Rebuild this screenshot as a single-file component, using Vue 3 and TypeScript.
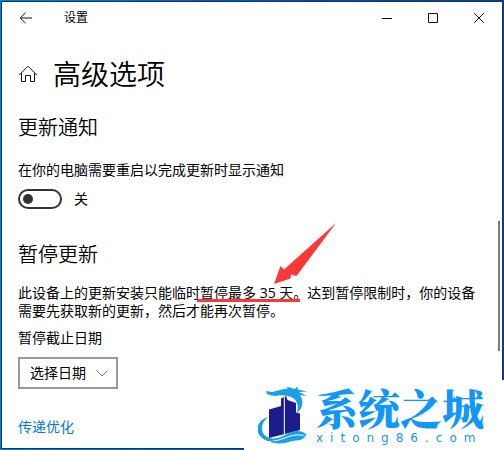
<script setup lang="ts">
import { ref } from 'vue'

const notify = ref(false)
const pauseUntil = ref('')
const dates: string[] = ['7 天', '14 天', '35 天']
</script>

<template>
  <div class="desktop">
    <div class="window">
      <header class="titlebar">
        <button class="back" type="button" aria-label="返回">
          <svg width="14" height="12" viewBox="0 0 14 12">
            <path d="M6.5 .8 1.2 6l5.3 5.2M1.2 6H13" />
          </svg>
        </button>
        <span class="caption">设置</span>
        <div class="controls">
          <button type="button" aria-label="最小化">
            <svg width="10" height="10" viewBox="0 0 10 10"><path d="M0 5.5h10" /></svg>
          </button>
          <button type="button" aria-label="最大化">
            <svg width="10" height="10" viewBox="0 0 10 10"><path d="M.5.5h9v9h-9z" /></svg>
          </button>
          <button type="button" aria-label="关闭">
            <svg width="10" height="10" viewBox="0 0 10 10"><path d="m.2.2 9.6 9.6m0-9.6L.2 9.8" /></svg>
          </button>
        </div>
      </header>

      <main class="page">
        <div class="heading">
          <svg class="home" width="20" height="18" viewBox="0 0 20 18">
            <path d="M1 10.2 10 1.2l9 9M3.5 8.2V16.500h4v-6h5v6h4V8.2" />
          </svg>
          <h1>高级选项</h1>
        </div>

        <section class="notify">
          <h2>更新通知</h2>
          <p id="notify-text">在你的电脑需要重启以完成更新时显示通知</p>
          <label class="toggle">
            <input v-model="notify" type="checkbox" role="switch" aria-describedby="notify-text" />
            <span>{{ notify ? '开' : '关' }}</span>
          </label>
        </section>

        <section class="pause">
          <h2>暂停更新</h2>
          <p>
            此设备上的更新安装只能临时<span class="marked">暂停最多 35 天。<svg
              class="arrow" width="64" height="64" viewBox="0 0 64 64" aria-hidden="true"
            ><path d="M1 62 7.500 44 11 47.500 63 1 23.500 54 18 52.500l-.5 4z" /></svg></span>达到暂停限制时，你的设备需要先获取新的更新，然后才能再次暂停。
          </p>
          <label class="date-label" for="pause-date">暂停截止日期</label>
          <div class="picker">
            <select id="pause-date" v-model="pauseUntil">
              <option value="">选择日期</option>
              <option v-for="d in dates" :key="d" :value="d">{{ d }}</option>
            </select>
            <svg width="12" height="7" viewBox="0 0 12 7" aria-hidden="true"><path d="m.5.5 5.500 5.500L11.500.5" /></svg>
          </div>
        </section>

        <a class="link" href="#">传递优化</a>
      </main>
      <div class="scrollbar"></div>
    </div>

    <aside class="watermark">
      <svg class="emblem" width="50" height="58" viewBox="3 6 50 58" aria-hidden="true">
        <path class="tower" d="M14 29.500 26 26V18.500L31 16l1.500 4L41 23v9.500l4 1V50L30 54 14 58z" />
        <path class="gap" d="M29.300 16.500V55" />
        <path class="wave" d="M13 37C0 41-1 54 10 60c13 6 22 1 30-2 5-1.500 9-1 12-3-3-3-7-4.500-11-4-8 1-14 7-22 7.500C7 59 2 46 13 37z" />
        <path class="gap" d="M13 61.500C24 62 31 56 41 55c4-.4 7 .5 9 .5" />
        <path class="wave" d="M12 59c9 5 18 2 25-1 5-2 10-1 14-3-3 6-8 5-14 6-9 3-18 4-25-2z" />
        <path class="wave" d="M12 14l-1-3 6 1 12-3 4-.5L31 6.500l9 2.500 2-2.500 1 3 9 2-8 .5 8 4-7-1c4 6 3 13-3 18 2-9 0-15-9-17-5-1-9-1-12 0-4 0-6-1-9-2z" />
      </svg>
      <div class="wordmark">
        <strong>系统之城</strong>
        <span>xitong86.com</span>
      </div>
    </aside>
  </div>
</template>

<style>
body {
  margin: 0;
}
</style>

<style scoped>
.desktop {
  position: relative;
  box-sizing: border-box;
  min-height: 100vh;
  display: flex;
  padding: 1px;
  background: linear-gradient(90deg, #0082d8, #0050b0 60%, #0a3c94);
  font-family: "Open Sans", "Noto Sans CJK SC", sans-serif;
  font-size: 14px;
  line-height: 18px;
  color: #000;
}
.window {
  position: relative;
  flex: 1;
  border: 1px solid #12365c;
  background: #fff;
}
svg {
  display: block;
  fill: none;
  stroke: #111;
}
button {
  display: flex;
  align-items: center;
  justify-content: center;
  padding: 0;
  border: 0;
  background: none;
}
.titlebar {
  display: flex;
  align-items: center;
  height: 32px;
  font-size: 12px;
}
.back {
  width: 48px;
  height: 32px;
}
.caption {
  margin-left: 14px;
}
.controls {
  display: flex;
  margin-left: auto;
}
.controls button {
  width: 46px;
  height: 32px;
}
.page {
  padding: 20px 24px 12px 16px;
}
.heading {
  display: flex;
  align-items: center;
  gap: 15px;
}
h1,
h2,
p {
  margin: 0;
}
h1,
h2 {
  font-weight: 350;
}
h1 {
  font-size: 28px;
  line-height: 40px;
}
h2 {
  font-size: 20px;
  line-height: 28px;
}
.notify {
  margin-top: 20px;
}
.notify p {
  margin-top: 19px;
}
.toggle {
  display: flex;
  align-items: center;
  gap: 12px;
  margin-top: 10px;
}
.toggle input {
  appearance: none;
  box-sizing: border-box;
  width: 44px;
  height: 20px;
  margin: 0;
  padding: 3px;
  border: 2px solid #333;
  border-radius: 10px;
}
.toggle input::before {
  content: "";
  display: block;
  width: 10px;
  height: 10px;
  border-radius: 50%;
  background: #333;
}
.toggle input:checked::before {
  margin-left: auto;
}
.pause {
  margin-top: 32px;
}
.pause p {
  margin-top: 15px;
}
.marked {
  position: relative;
}
.marked::after {
  content: "";
  position: absolute;
  left: -3px;
  right: 7px;
  bottom: 0;
  height: 3px;
  background: #fb3838;
}
.arrow {
  position: absolute;
  left: 73px;
  bottom: 16px;
  fill: #fb3838;
  stroke: none;
}
.date-label {
  display: block;
  margin-top: 9px;
}
.picker {
  position: relative;
  width: 100px;
  margin-top: 10px;
}
.picker select {
  appearance: none;
  box-sizing: border-box;
  display: block;
  width: 100%;
  height: 32px;
  padding: 0 10px;
  border: 2px solid #999;
  border-radius: 0;
  background: #fff;
  color: #000;
  font: inherit;
}
.picker svg {
  position: absolute;
  right: 10px;
  top: 13px;
  stroke: #777;
  pointer-events: none;
}
.link {
  display: inline-block;
  margin-top: 29px;
  color: #0078d7;
  text-decoration: none;
}
.scrollbar {
  position: absolute;
  right: 2px;
  top: 219px;
  width: 2px;
  height: 130px;
  background: #7a7a7a;
}
.watermark {
  position: absolute;
  right: 0;
  bottom: 0;
  box-sizing: border-box;
  display: flex;
  gap: 8px;
  width: 260px;
  height: 70px;
  padding: 6px 14px 0;
  background: #fff;
}
.emblem .tower {
  fill: #1c1c8c;
  stroke: none;
}
.emblem .gap {
  stroke: #fff;
}
.emblem .wave {
  fill: #1aa0e4;
  stroke: none;
}
.wordmark {
  display: flex;
  flex-direction: column;
  gap: 2px;
  color: #1296f8;
}
.wordmark strong {
  font-family: "Noto Serif CJK SC", "Noto Sans CJK SC", serif;
  font-size: 42px;
  font-weight: 900;
  line-height: 42px;
}
.wordmark span {
  font-family: "DejaVu Sans", sans-serif;
  font-size: 12px;
  line-height: 16px;
  letter-spacing: 7px;
}
</style>
